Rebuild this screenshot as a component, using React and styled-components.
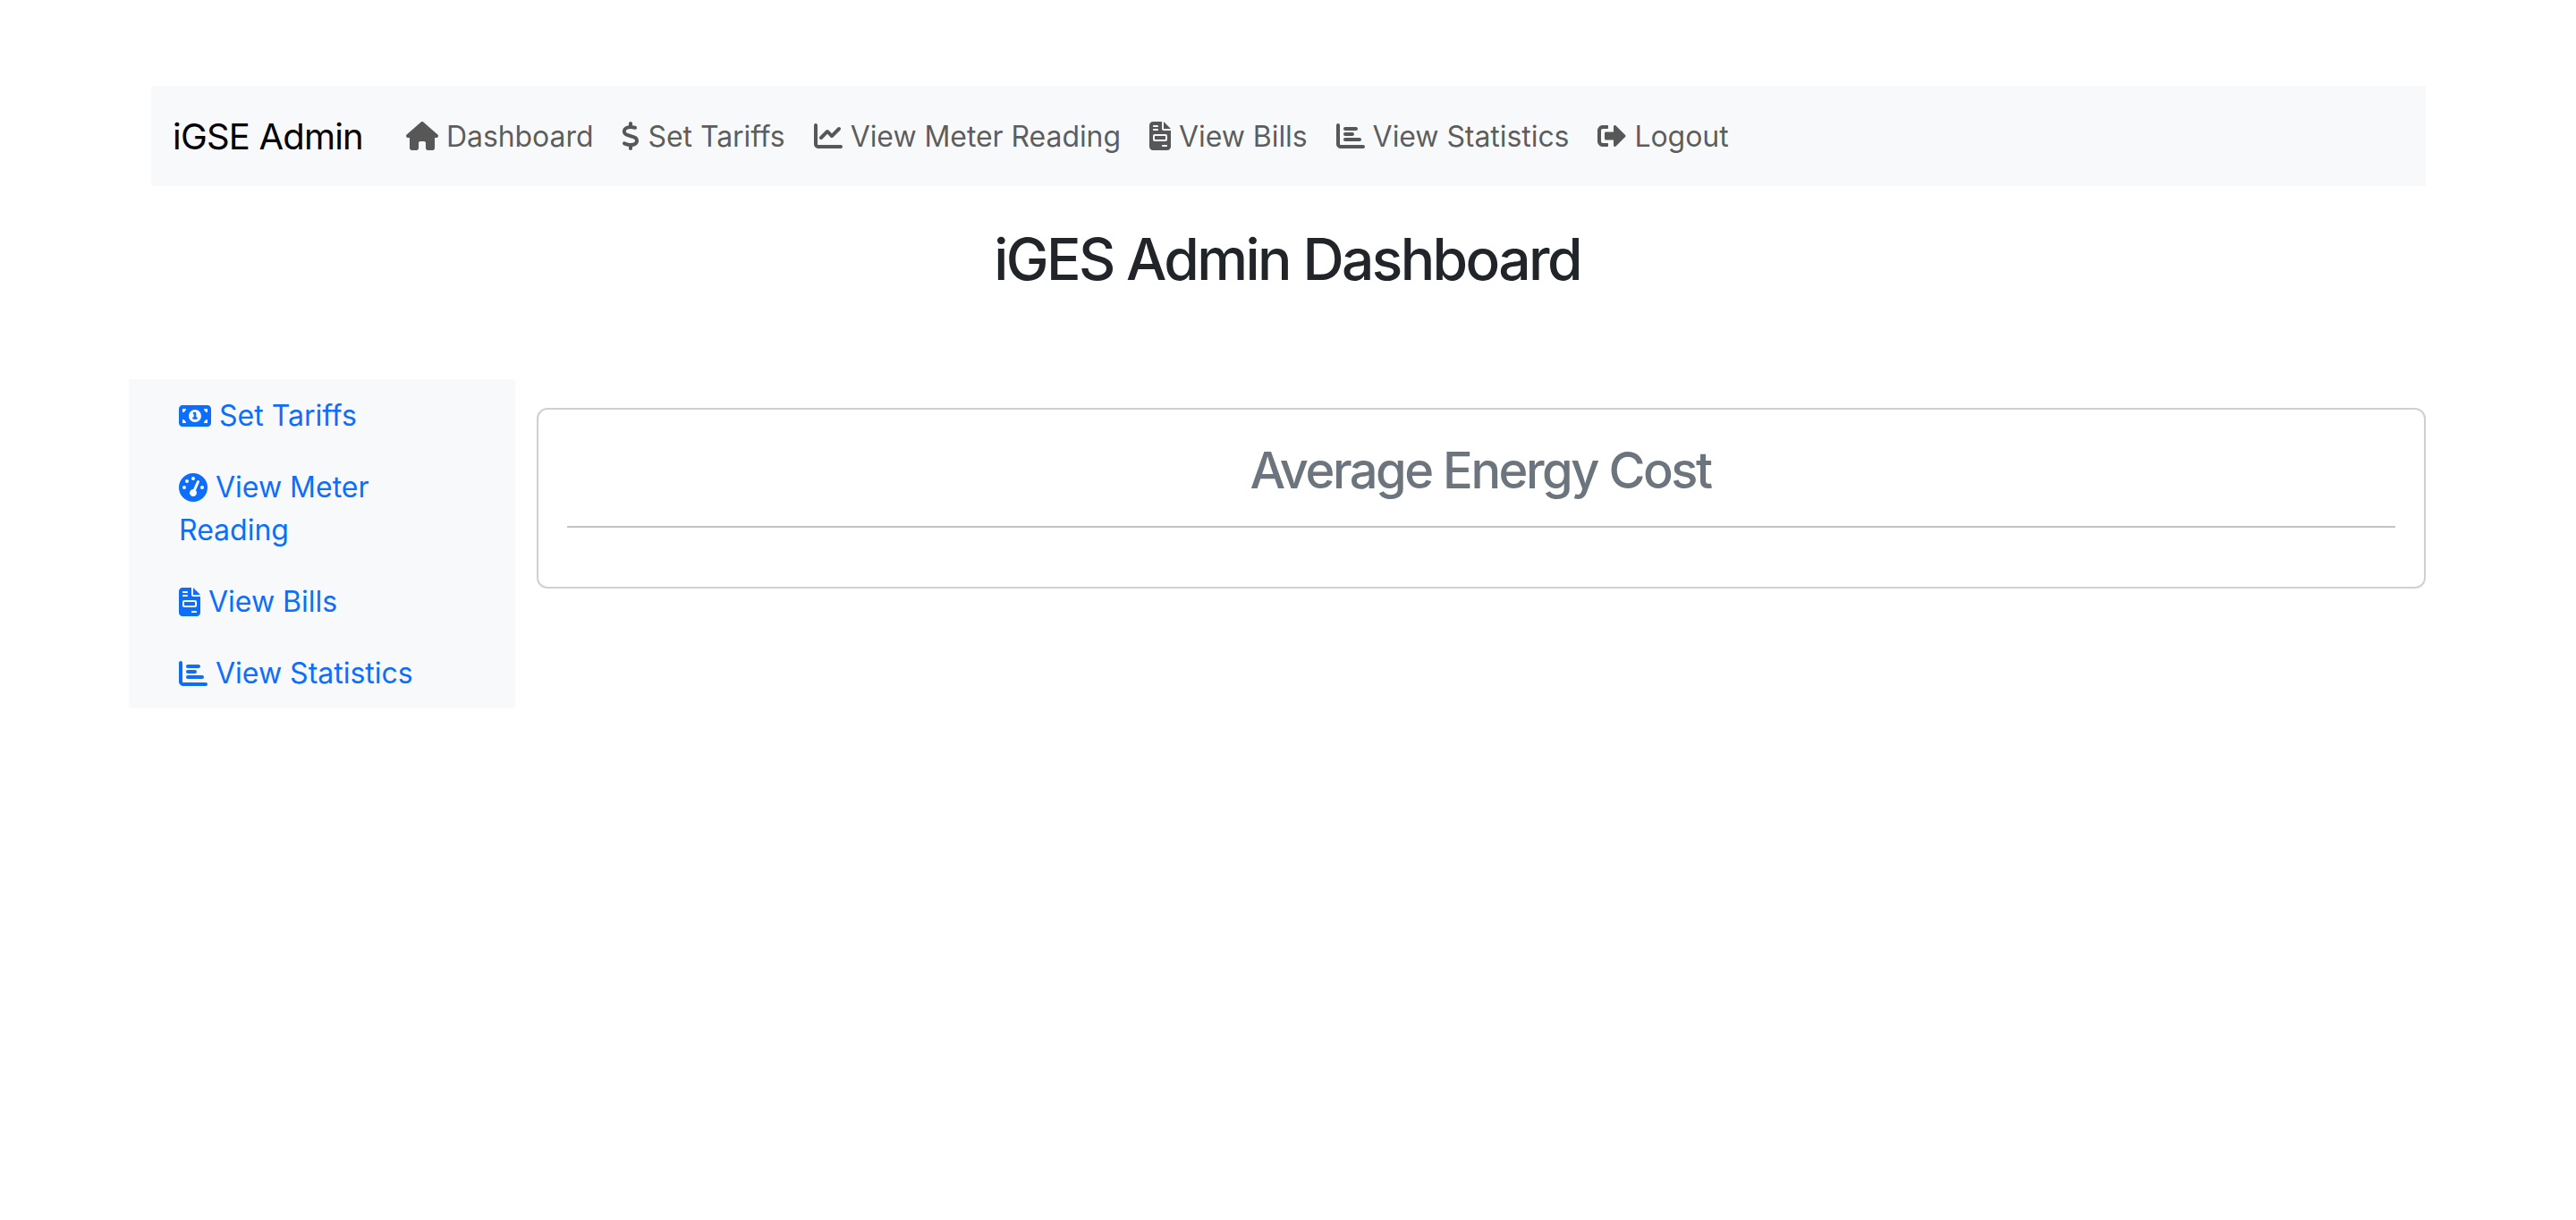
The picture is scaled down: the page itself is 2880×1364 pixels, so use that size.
import styled, { createGlobalStyle } from 'styled-components';
import { FaHouse, FaDollarSign, FaChartLine, FaFileInvoice, FaMoneyBill1, FaGaugeHigh, FaChartBar } from 'react-icons/fa6';
import { FaSignOutAlt } from 'react-icons/fa';

const GlobalStyle = createGlobalStyle`
  * { box-sizing: border-box; }
  body {
    margin: 0;
    background: #fff;
    font-family: Inter, "Liberation Sans", sans-serif;
    color: #212529;
  }
`

const Page = styled.div`
  padding: 96px 168px 0 144px;
`

const Navbar = styled.nav`
  display: flex;
  align-items: center;
  height: 112px;
  margin-left: 25px;
  padding: 0 24px;
  background: #f8f9fa;
`

const Brand = styled.a`
  font-size: 40px;
  color: #000;
  margin-right: 48px;
  letter-spacing: -0.8px;
`

const NavLinks = styled.div`
  display: flex;
  gap: 32px;
`

const NavLink = styled.a`
  display: flex;
  align-items: center;
  gap: 9px;
  font-size: 32px;
  letter-spacing: -0.06px;
  color: rgba(0, 0, 0, 0.65);
  svg { height: 32px; width: ${p => p.$icon}px; }
`

const Title = styled.h1`
  margin: 0 -24px 0 0;
  height: 216px;
  padding: 44px 2px 0 0;
  text-align: center;
  font-size: 64px;
  line-height: 76px;
  font-weight: 500;
  letter-spacing: -2.6px;
`

const Row = styled.div`
  display: flex;
  align-items: flex-start;
  gap: 24px;
`

const Sidebar = styled.ul`
  width: 432px;
  flex: none;
  margin: 0;
  padding: 0 56px;
  list-style: none;
  background: #f8f9fa;
`

const SideItem = styled.li`
  padding: 17px 0 15px;
  font-size: 32px;
  line-height: 48px;
  color: #0d6efd;
  letter-spacing: 0;
  svg { height: 32px; width: ${p => p.$icon}px; vertical-align: -5px; }
`

const Card = styled.section`
  flex: 1;
  height: 202px;
  margin-top: 32px;
  padding: 30px 32px 0;
  border: 2px solid #d0d0d0;
  border-radius: 12px;
`

const CardTitle = styled.h2`
  margin: 0;
  padding: 0 2px 24px 0;
  border-bottom: 2px solid #c4c4c4;
  text-align: center;
  font-size: 56px;
  line-height: 76px;
  font-weight: 500;
  letter-spacing: -2.5px;
  color: #6c757d;
`

const navItems = [
  { label: 'Dashboard', Icon: FaHouse, icon: 36 },
  { label: 'Set Tariffs', Icon: FaDollarSign, icon: 20 },
  { label: 'View Meter Reading', Icon: FaChartLine, icon: 32 },
  { label: 'View Bills', Icon: FaFileInvoice, icon: 24 },
  { label: 'View Statistics', Icon: FaChartBar, icon: 32 },
  { label: 'Logout', Icon: FaSignOutAlt, icon: 32 },
]

const sideItems = [
  { label: 'Set Tariffs', Icon: FaMoneyBill1, icon: 36 },
  { label: 'View Meter Reading', Icon: FaGaugeHigh, icon: 32 },
  { label: 'View Bills', Icon: FaFileInvoice, icon: 24 },
  { label: 'View Statistics', Icon: FaChartBar, icon: 32 },
]

export default function App() {
  return (
    <Page>
      <GlobalStyle />
      <Navbar>
        <Brand>iGSE Admin</Brand>
        <NavLinks>
          {navItems.map(({ label, Icon, icon }) => (
            <NavLink key={label} $icon={icon}><Icon />{label}</NavLink>
          ))}
        </NavLinks>
      </Navbar>
      <Title>iGES Admin Dashboard</Title>
      <Row>
        <Sidebar>
          {sideItems.map(({ label, Icon, icon }) => (
            <SideItem key={label} $icon={icon}><Icon /> {label}</SideItem>
          ))}
        </Sidebar>
        <Card>
          <CardTitle>Average Energy Cost</CardTitle>
        </Card>
      </Row>
    </Page>
  )
}
